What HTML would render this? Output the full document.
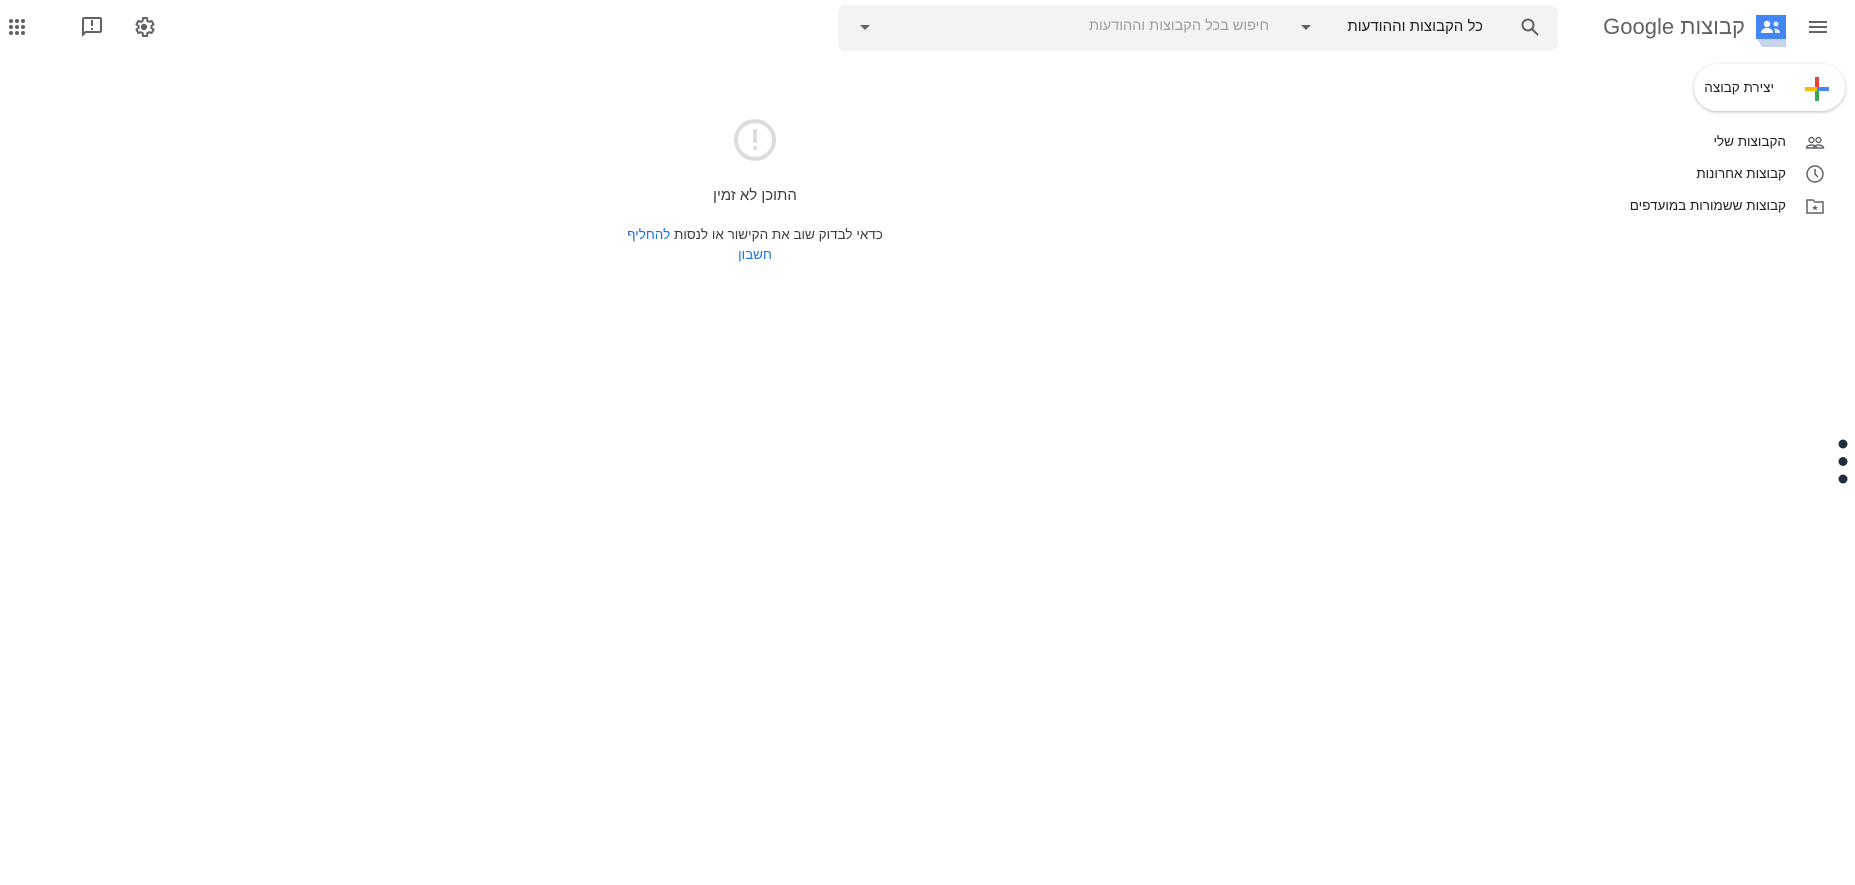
<!DOCTYPE html>
<html dir="rtl"><head><meta charset="utf-8"><style>
body{margin:0;width:1855px;height:885px;background:#fff;font-family:"Liberation Sans","Noto Sans CJK SC",sans-serif;position:relative;overflow:hidden;color:#202124}
.a{position:absolute}
</style></head><body>
<svg class="a" style="left:1806px;top:15px" width="24" height="24" viewBox="0 0 24 24"><path d="M3 18h18v-2H3v2zm0-5h18v-2H3v2zm0-7v2h18V6H3z" fill="#5f6368"/></svg>
<svg class="a" style="left:1754px;top:13px" width="34" height="34" viewBox="0 0 34 34"><path d="M2 24h30v10l-9-10z" fill="#1a73e8"/><path d="M2 24l6 10h24V24z" fill="#c6d4ea"/><rect x="2" y="2" width="30" height="24" fill="#4285f4"/><circle cx="13" cy="11" r="3.2" fill="#fff"/><path d="M7 20c0-3.5 3-5 6-5s6 1.5 6 5z" fill="#fff"/><circle cx="22" cy="11" r="2.5" fill="#e1eaff"/><path d="M20 15.5c3 0 6 1.2 6 4.5h-5c0-1.8-.4-3.4-1-4.5z" fill="#e1eaff"/></svg>
<div class="a" style="right:110px;top:14px;font-size:22px;color:#5f6368;white-space:nowrap">קבוצות Google</div>
<div class="a" style="left:838px;top:5px;width:720px;height:46px;background:#f1f3f4;border-radius:8px"></div>
<svg class="a" style="left:1518px;top:15px" width="24" height="24" viewBox="0 0 24 24" fill="none" stroke="#5f6368" stroke-width="2"><circle cx="10" cy="10" r="5.5"/><path d="M14 14l6 6"/></svg>
<div class="a" style="right:372px;top:18px;font-size:15px;color:#202124;white-space:nowrap">כל הקבוצות וההודעות</div>
<div class="a" style="left:1301px;top:25px;border:5px solid transparent;border-top-color:#5f6368;border-bottom:0"></div>
<div class="a" style="right:586px;top:18px;font-size:14.5px;color:#9aa0a6;white-space:nowrap">חיפוש בכל הקבוצות וההודעות</div>
<div class="a" style="left:860px;top:25px;border:5px solid transparent;border-top-color:#5f6368;border-bottom:0"></div>
<svg class="a" style="left:5px;top:15px" width="24" height="24" viewBox="0 0 24 24" fill="#5f6368"><circle cx="6" cy="6" r="2"/><circle cx="12" cy="6" r="2"/><circle cx="18" cy="6" r="2"/><circle cx="6" cy="12" r="2"/><circle cx="12" cy="12" r="2"/><circle cx="18" cy="12" r="2"/><circle cx="6" cy="18" r="2"/><circle cx="12" cy="18" r="2"/><circle cx="18" cy="18" r="2"/></svg>
<svg class="a" style="left:80px;top:15px" width="24" height="24" viewBox="0 0 24 24"><path d="M20 2H4c-1.1 0-2 .9-2 2v18l4-4h14c1.1 0 2-.9 2-2V4c0-1.1-.9-2-2-2zm0 14H5.2L4 17.2V4h16v12zM11 5h2v6h-2zm0 8h2v2h-2z" fill="#5f6368"/></svg>
<svg class="a" style="left:132px;top:15px" width="24" height="24" viewBox="0 0 24 24"><path d="M19.4 13a7.5 7.5 0 0 0 0-2l2.1-1.6-2-3.5-2.5 1a7 7 0 0 0-1.7-1L15 3h-4l-.4 2.9a7 7 0 0 0-1.7 1l-2.5-1-2 3.5L6.6 11a7.5 7.5 0 0 0 0 2l-2.1 1.6 2 3.5 2.5-1a7 7 0 0 0 1.7 1L11 21h4l.4-2.9a7 7 0 0 0 1.7-1l2.5 1 2-3.5z" fill="none" stroke="#5f6368" stroke-width="2" stroke-linejoin="round"/><circle cx="12" cy="12" r="3.2" fill="#5f6368"/></svg>
<div class="a" style="left:1694px;top:64px;width:151px;height:47px;border-radius:24px;background:#fff;box-shadow:0 1px 3px rgba(60,64,67,.35)"></div>
<svg class="a" style="left:1804px;top:76px" width="26" height="26" viewBox="0 0 26 26"><rect x="11" y="1" width="4" height="12" fill="#ea4335"/><rect x="11" y="13" width="4" height="12" fill="#34a853"/><rect x="1" y="11" width="12" height="4" fill="#fbbc04"/><rect x="13" y="11" width="12" height="4" fill="#4285f4"/></svg>
<div class="a" style="right:81px;top:80px;font-size:13.5px;white-space:nowrap">יצירת קבוצה</div>
<svg class="a" style="left:1805px;top:133px" width="20" height="20" viewBox="0 0 20 20" fill="none" stroke="#5f6368" stroke-width="1.4"><circle cx="6.5" cy="7" r="2.5"/><circle cx="13.5" cy="7" r="2.5"/><path d="M1.5 15c0-2 2.5-3 5-3s5 1 5 3zM8.5 15c0-2 2.5-3 5-3s5 1 5 3z"/></svg>
<div class="a" style="right:69px;top:134px;font-size:13.5px;white-space:nowrap">הקבוצות שלי</div>
<svg class="a" style="left:1805px;top:164px" width="20" height="20" viewBox="0 0 20 20" fill="none" stroke="#5f6368" stroke-width="1.5"><circle cx="10" cy="10" r="8"/><path d="M10 5v5l3 3"/></svg>
<div class="a" style="right:69px;top:166px;font-size:13.5px;white-space:nowrap">קבוצות אחרונות</div>
<svg class="a" style="left:1805px;top:196px" width="20" height="20" viewBox="0 0 20 20" fill="none" stroke="#5f6368" stroke-width="1.5"><path d="M2 4h6l2 2h8v11H2z"/><path d="M10 9l1 2h2l-1.6 1.3.6 2-2-1.2-2 1.2.6-2L7 11h2z" fill="#5f6368" stroke="none"/></svg>
<div class="a" style="right:69px;top:198px;font-size:13.5px;white-space:nowrap">קבוצות ששמורות במועדפים</div>
<svg class="a" style="left:733px;top:118px" width="44" height="44" viewBox="0 0 44 44"><circle cx="22" cy="22" r="19" fill="none" stroke="#dadce0" stroke-width="4"/><rect x="20" y="11" width="4" height="14" rx="1.5" fill="#dadce0"/><rect x="20" y="28" width="4" height="4" rx="1.5" fill="#dadce0"/></svg>
<div class="a" style="left:555px;width:400px;top:187px;text-align:center;font-size:15px;color:#3c4043">התוכן לא זמין</div>
<div class="a" style="left:620px;width:270px;top:225px;text-align:center;font-size:13.5px;line-height:20px;color:#3c4043">כדאי לבדוק שוב את הקישור או לנסות <span style="color:#1a73e8">להחליף חשבון</span></div>
<svg class="a" style="left:1836px;top:437px" width="14" height="50" viewBox="0 0 14 50" fill="#1f2d3d"><circle cx="7" cy="7" r="4.5"/><circle cx="7" cy="24.5" r="4.5"/><circle cx="7" cy="42" r="4.5"/></svg>
</body></html>
